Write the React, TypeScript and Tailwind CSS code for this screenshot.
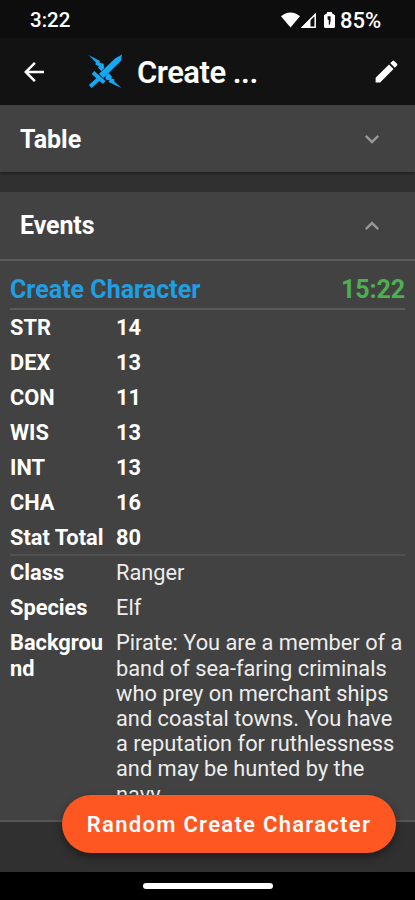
import React from "react";
import { MdArrowBack, MdEdit, MdExpandLess, MdExpandMore } from "react-icons/md";

const stats = [
  { label: "STR", value: 14 },
  { label: "DEX", value: 13 },
  { label: "CON", value: 11 },
  { label: "WIS", value: 13 },
  { label: "INT", value: 13 },
  { label: "CHA", value: 16 },
  { label: "Stat Total", value: 80 },
];

const details = [
  { label: "Class", value: "Ranger" },
  { label: "Species", value: "Elf" },
  {
    label: "Background",
    value:
      "Pirate: You are a member of a band of sea-faring criminals who prey on merchant ships and coastal towns. You have a reputation for ruthlessness and may be hunted by the navy.",
  },
];

function StatusBar() {
  return (
    <div className="flex h-[38px] shrink-0 items-center justify-between bg-[#0d0d0d] pl-[30px] pr-[34px] pt-0.5 text-[20.5px] font-medium">
      <span>3:22</span>
      <div className="flex items-center">
        <svg width="19" height="16" viewBox="0 0 19 16" fill="currentColor">
          <path d="M0 4.2C5.4-.9 13.6-.9 19 4.2L9.5 15.6Z" />
        </svg>
        <svg className="ml-px" width="15" height="15" viewBox="0 0 15 15">
          <path d="M14.2 1.4V14.2H1.6Z" fill="none" stroke="currentColor" strokeWidth="1.5" />
          <path d="M0 15 9.5 5.2V15Z" fill="currentColor" />
        </svg>
        <svg className="ml-2 mr-[5px]" width="11" height="16" viewBox="0 0 11 16">
          <path
            d="M3 0H8V1.2L11 3.2V14.5Q11 16 9.5 16H1.5Q0 16 0 14.5V3.2L3 1.2Z"
            fill="currentColor"
          />
          <path d="M3.6 4.2H6.6V8.6L5.8 12.8H4.8V8.2L3.6 7.2Z" fill="#0d0d0d" />
        </svg>
        <span className="text-[22px] tracking-[-0.1px]">85%</span>
      </div>
    </div>
  );
}

function SwordLogo() {
  return (
    <svg className="ml-[39px]" width="35" height="35" viewBox="0 0 35 35" fill="#14a9f5">
      {/* blade, guard, grip */}
      <path d="M34 .5 32.8 7 15.4 24 11 19.8 27 4.6Z" />
      <path d="M5 18.6 16.2 28.4M10.5 25 2.2 32.4" stroke="#14a9f5" strokeWidth="4" />
      {/* lightning */}
      <path d="M.5 1 12 7 11.6 8.8 15.6 9.8 16.2 14.2 13.4 17 9.8 13.6 11 12.6 7.2 10.2 8 8.4Z" />
      <path d="M20.5 19 24 22.6 23.2 24.2 26.6 25.4 26 27.2 33.3 34 20.6 28 21.4 26.2 17.6 25.4 17.4 22Z" />
    </svg>
  );
}

function AppBar() {
  return (
    <header className="flex h-[67px] shrink-0 items-center bg-[#121212] pl-[19px] pr-[14px]">
      <MdArrowBack size={30} />
      <SwordLogo />
      <h1 className="ml-[14px] flex-1 pt-[3px] text-[31px] font-semibold tracking-[-0.5px]">Create ...</h1>
      <MdEdit size={29} />
    </header>
  );
}

function Row({ label, value, bold }: { label: string; value: string | number; bold?: boolean }) {
  return (
    <div className="flex py-[4.9px] text-[21.8px] leading-[25.2px]">
      <div className="mr-[10px] w-[96px] shrink-0 font-bold break-all">{label}</div>
      <div className={bold ? "font-bold" : "text-[#ededed]"}>{value}</div>
    </div>
  );
}

function App() {
  return (
    <div
      className="flex h-[900px] w-[415px] flex-col overflow-hidden bg-[#303030] text-white"
      style={{ fontFamily: "Roboto, sans-serif" }}
    >
      <StatusBar />
      <AppBar />
      <main className="relative flex-1 overflow-hidden">
        <section className="flex h-[67px] items-center justify-between bg-[#424242] pl-5 pr-[29px] shadow-[0_1px_3px_rgba(0,0,0,0.5)]">
          <h2 className="pt-0.5 text-[25px] font-bold">Table</h2>
          <MdExpandMore size={28} className="text-[#979797]" />
        </section>

        <section className="mt-5 h-[630px] border-b-2 border-[#555555] bg-[#424242]">
          <div className="flex h-[69px] items-center justify-between border-b-2 border-[#5a5a5a] pl-5 pr-[29px]">
            <h2 className="pt-px text-[25px] font-bold tracking-[-0.1px]">Events</h2>
            <MdExpandLess size={28} className="text-[#979797]" />
          </div>
          <div className="px-[10px]">
            <div className="flex h-[49px] items-end justify-between border-b-2 border-[#5a5a5a] pb-[3px] text-[25px] leading-[30px] font-bold">
              <h3 className="text-[#1c9fe5]">Create Character</h3>
              <span className="tracking-[-0.1px] text-[#4caf50]">15:22</span>
            </div>
            <div className="h-[245.5px] border-b-2 border-[#505050]">
              {stats.map((s) => (
                <Row key={s.label} label={s.label} value={s.value} bold />
              ))}
            </div>
            {details.map((d) => (
              <Row key={d.label} label={d.label} value={d.value} />
            ))}
          </div>
        </section>

        <button className="absolute bottom-[19px] left-[62px] h-[58px] w-[334px] rounded-full bg-[#ff5722] text-[22px] font-semibold tracking-[1.3px] shadow-[0_4px_8px_rgba(0,0,0,0.4)]">
          Random Create Character
        </button>
      </main>
      <div className="flex h-7 shrink-0 items-center justify-center bg-black">
        <div className="h-[6px] w-[130px] rounded-full bg-white" />
      </div>
    </div>
  );
}

export default App;
